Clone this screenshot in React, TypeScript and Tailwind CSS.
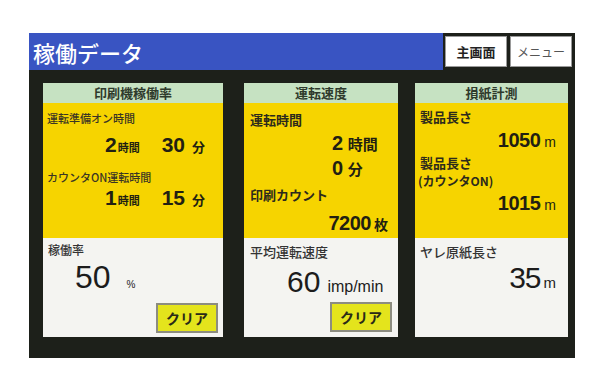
import React from 'react'

const jp = "font-['Noto_Sans_CJK_JP',sans-serif]"
const num = "font-['Liberation_Sans','Noto_Sans_CJK_JP',sans-serif]"

function ClearButton() {
  return (
    <div
      className={`flex h-[30px] w-[62px] items-center justify-center border-2 border-[#8c8c80] bg-[#e4e41c] text-[14px] font-bold text-[#2a2a18] ${jp}`}
    >
      クリア
    </div>
  )
}

function PanelHeader({ title }: { title: string }) {
  return (
    <div
      className={`flex h-[20px] items-center justify-center bg-[#c6e2c2] text-[13px] font-bold leading-[20px] text-[#2f3a2c] ${jp}`}
    >
      {title}
    </div>
  )
}

function Label({ children, className = '' }: { children: React.ReactNode; className?: string }) {
  return (
    <div className={`h-[16px] whitespace-nowrap text-[13px] font-bold leading-[16px] text-[#2c2a1c] ${jp} ${className}`}>
      {children}
    </div>
  )
}

// big bold number with a Japanese unit after it
function Value({ value, unit, className = '' }: { value: string; unit: string; className?: string }) {
  return (
    <div className={`flex h-[22px] items-baseline leading-[22px] text-[#221f12] ${className}`}>
      <span className={`text-[20px] font-bold tracking-[-0.5px] ${num}`}>{value}</span>
      <span className={`ml-[5px] text-[15px] font-bold ${jp}`}>{unit}</span>
    </div>
  )
}

// same, with a metre unit
function Metres({ value, className = '' }: { value: string; className?: string }) {
  return (
    <div className={`flex h-[22px] items-baseline leading-[22px] text-[#221f12] ${className}`}>
      <span className={`text-[20px] font-bold tracking-[-0.5px] ${num}`}>{value}</span>
      <span className={`ml-[4px] text-[14px] ${num}`}>m</span>
    </div>
  )
}

export default function App() {
  return (
    <div className="h-[382px] w-[602px] overflow-hidden bg-white pl-[29px] pt-[33px]">
      <div className="flex h-[325px] w-[546px] flex-col bg-[#1d201a]">
        {/* title bar */}
        <div className="flex h-[37px] items-center">
          <div className="flex h-full w-[414px] items-center bg-[#3954c2] pl-[4px]">
            <span className={`text-[22px] font-medium leading-none text-white ${jp}`}>稼働データ</span>
          </div>
          <div
            className={`ml-[2px] flex h-[31px] w-[62px] items-center justify-center border border-[#9a9a9a] bg-white text-[13px] font-bold text-[#222] ${jp}`}
          >
            主画面
          </div>
          <div
            className={`ml-[3px] flex h-[31px] w-[62px] items-center justify-center border border-[#9a9a9a] bg-white text-[12px] text-[#555] ${jp}`}
          >
            メニュー
          </div>
        </div>

        {/* panels */}
        <div className="mt-[13px] flex h-[254px] pl-[14px]">
          {/* 印刷機稼働率 */}
          <div className="flex w-[180px] flex-col">
            <PanelHeader title="印刷機稼働率" />
            <div className="flex h-[135px] flex-col bg-[#f6d400] pl-[4px] pt-[8px]">
              <div className={`h-[14px] text-[11px] font-medium leading-[14px] text-[#3a3524] ${jp}`}>運転準備オン時間</div>
              <div className="mt-[8px] flex h-[24px] items-baseline pl-[58px] leading-[24px] text-[#221f12]">
                <span className={`text-[21px] font-bold ${num}`}>2</span>
                <span className={`ml-[1px] text-[11px] font-bold ${jp}`}>時間</span>
                <span className={`ml-[22px] text-[21px] font-bold ${num}`}>30</span>
                <span className={`ml-[7px] text-[13px] font-bold ${jp}`}>分</span>
              </div>
              <div className={`mt-[13px] h-[14px] text-[11px] font-medium leading-[14px] text-[#3a3524] ${jp}`}>
                カウンタON運転時間
              </div>
              <div className="mt-[2px] flex h-[24px] items-baseline pl-[58px] leading-[24px] text-[#221f12]">
                <span className={`text-[21px] font-bold ${num}`}>1</span>
                <span className={`ml-[1px] text-[11px] font-bold ${jp}`}>時間</span>
                <span className={`ml-[22px] text-[21px] font-bold ${num}`}>15</span>
                <span className={`ml-[7px] text-[13px] font-bold ${jp}`}>分</span>
              </div>
            </div>
            <div className="flex flex-1 flex-col bg-[#f4f4f1] pl-[5px] pr-[5px] pt-[5px]">
              <div className={`h-[14px] text-[12px] font-medium leading-[14px] text-[#333] ${jp}`}>稼働率</div>
              <div className="mt-[4px] flex h-[32px] items-baseline pl-[27px] leading-[32px] text-[#1c1c1c]">
                <span className={`text-[32px] ${num}`}>50</span>
                <span className={`ml-[16px] text-[10px] ${num}`}>%</span>
              </div>
              <div className="mt-[10px] flex justify-end">
                <ClearButton />
              </div>
            </div>
          </div>

          {/* 運転速度 */}
          <div className="ml-[21px] flex w-[154px] flex-col">
            <PanelHeader title="運転速度" />
            <div className="flex h-[135px] flex-col bg-[#f6d400] pl-[6px] pr-[10px] pt-[9px]">
              <Label>運転時間</Label>
              <Value value="2" unit="時間" className="mt-[4px] pl-[82px]" />
              <Value value="0" unit="分" className="mt-[3px] pl-[82px]" />
              <Label className="mt-[8px]">印刷カウント</Label>
              <div className="mt-[9px] flex h-[22px] items-baseline justify-end leading-[22px] text-[#221f12]">
                <span className={`text-[20px] font-bold tracking-[-0.5px] ${num}`}>7200</span>
                <span className={`ml-[3px] text-[14px] font-bold ${jp}`}>枚</span>
              </div>
            </div>
            <div className="flex flex-1 flex-col bg-[#f4f4f1] pl-[6px] pr-[6px] pt-[6px]">
              <div className={`h-[16px] text-[13px] font-medium leading-[16px] text-[#333] ${jp}`}>平均運転速度</div>
              <div className="mt-[7px] flex h-[30px] items-baseline pl-[37px] leading-[30px] text-[#1c1c1c]">
                <span className={`text-[30px] ${num}`}>60</span>
                <span className={`ml-[7px] text-[16px] ${num}`}>imp/min</span>
              </div>
              <div className="mt-[5px] flex justify-end">
                <ClearButton />
              </div>
            </div>
          </div>

          {/* 損紙計測 */}
          <div className="ml-[17px] flex w-[153px] flex-col">
            <PanelHeader title="損紙計測" />
            <div className="flex h-[135px] flex-col bg-[#f6d400] pl-[5px] pr-[12px] pt-[6px]">
              <Label>製品長さ</Label>
              <Metres value="1050" className="mt-[4px] justify-end" />
              <Label className="mt-[4px]">製品長さ</Label>
              <div className={`mt-[2px] -ml-[2px] h-[15px] whitespace-nowrap text-[12px] font-bold leading-[15px] text-[#2c2a1c] ${jp}`}>
                (カウンタON)
              </div>
              <Metres value="1015" className="mt-[4px] justify-end" />
            </div>
            <div className="flex flex-1 flex-col bg-[#f4f4f1] pl-[5px] pr-[12px] pt-[6px]">
              <div className={`h-[16px] text-[13px] font-medium leading-[16px] text-[#333] ${jp}`}>ヤレ原紙長さ</div>
              <div className="mt-[3px] flex h-[30px] items-baseline justify-end leading-[30px] text-[#1c1c1c]">
                <span className={`text-[30px] tracking-[-1px] ${num}`}>35</span>
                <span className={`ml-[3px] text-[15px] ${num}`}>m</span>
              </div>
            </div>
          </div>
        </div>
      </div>
    </div>
  )
}
